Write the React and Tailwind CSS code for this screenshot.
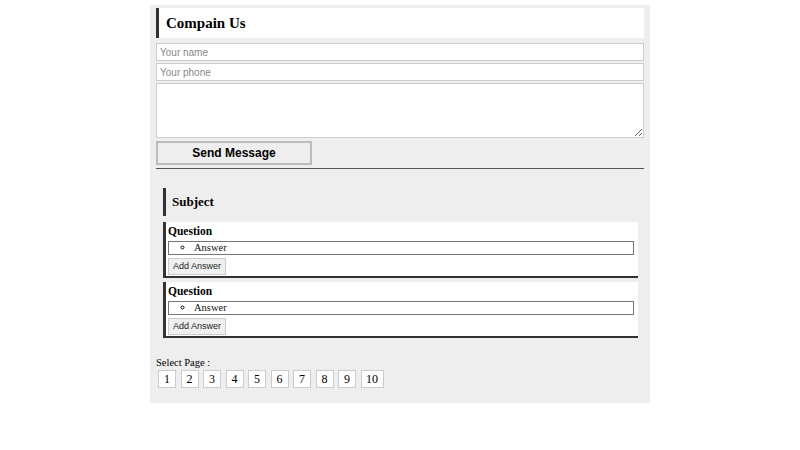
import React from 'react';

const serif = { fontFamily: '"Liberation Serif", "Times New Roman", serif' };
const sans = { fontFamily: '"Liberation Sans", Arial, sans-serif' };

function QuestionCard() {
    return (
        <div className="bg-white border-l-[3px] border-b-2 border-[#333] pl-[2px] pr-[4px] pt-[2px] pb-[1px]">
            <div className="text-[11.5px] font-bold leading-[15px] text-black">Question</div>
            <ul className="mt-[2px] h-[14px] border border-[#777] list-[circle] pl-[25px] text-[10.5px] leading-[12px] text-[#111]">
                <li>Answer</li>
            </ul>
            <button
                className="mt-[3px] block w-[58px] h-[17px] border border-[#ccc] bg-[#f0f0f0] text-[9px] leading-[15px] text-[#222]"
                style={sans}
            >
                Add Answer
            </button>
        </div>
    );
}

export default function App() {
    const pages = [1, 2, 3, 4, 5, 6, 7, 8, 9, 10];

    return (
        <div className="min-h-[450px] bg-white" style={serif}>
            <div className="w-[500px] mx-auto mt-[5px] bg-[#eeeeee] px-[6px] pt-[3px] pb-[15px]">
                {/* Header */}
                <div className="h-[30px] bg-white border-l-[3px] border-[#333] flex items-center pl-[7px]">
                    <h2 className="text-[15px] font-bold text-black">Compain Us</h2>
                </div>

                {/* Form */}
                <div style={sans}>
                    <input
                        className="mt-[5px] block w-full h-[18px] bg-white border border-[#ccc] px-[3px] text-[10px] placeholder:text-[#888] outline-none"
                        placeholder="Your name"
                    />
                    <input
                        className="mt-[2px] block w-full h-[18px] bg-white border border-[#ccc] px-[3px] text-[10px] placeholder:text-[#888] outline-none"
                        placeholder="Your phone"
                    />
                    <textarea className="mt-[2px] block w-full h-[55px] bg-white border border-[#ccc] outline-none" />
                    <button className="mt-[3px] block w-[156px] h-[24px] border-2 border-[#bbb] bg-[#eeeeee] text-[12px] font-bold text-black">
                        Send Message
                    </button>
                </div>
                <div className="mt-[3px] border-t border-[#555]" />

                {/* Subject */}
                <div className="mt-[19px] ml-[7px] mr-[6px] flex flex-col gap-[4px]">
                    <div className="mb-[2px] h-[28px] border-l-[3px] border-[#333] flex items-center pl-[6px]">
                        <h3 className="text-[13px] font-bold text-black">Subject</h3>
                    </div>
                    <QuestionCard />
                    <QuestionCard />
                </div>

                {/* Pagination */}
                <div className="mt-[19px] text-[10.5px] leading-[12px] text-black">Select Page :</div>
                <div className="mt-[1px] ml-[2px] flex gap-[4.5px]">
                    {pages.map((p) => (
                        <div
                            key={p}
                            className={`h-[18px] ${p === 10 ? 'w-[23px]' : 'w-[18px]'} bg-white border border-[#ccc] flex items-center justify-center text-[12px] text-black`}
                        >
                            {p}
                        </div>
                    ))}
                </div>
            </div>
        </div>
    );
}
